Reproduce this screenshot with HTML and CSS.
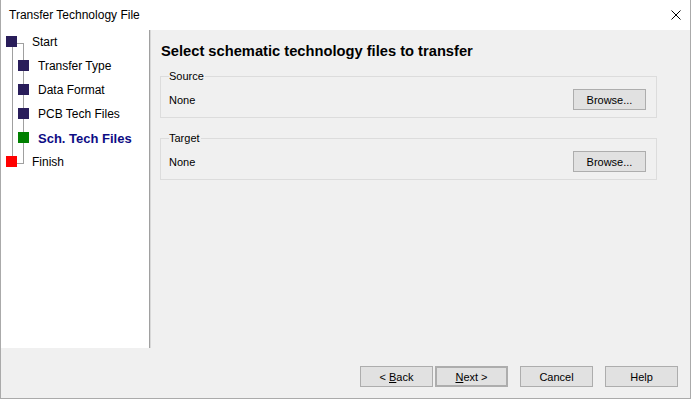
FILE: index.html
```html
<!DOCTYPE html>
<html lang="en">
<head>
  <meta charset="UTF-8" />
  <title>Transfer Technology File</title>
  <link rel="stylesheet" href="styles.css">
</head>
<body>
  <div class="janela">
    <div class="titulo">
      <span>Transfer Technology File</span>
      <svg class="fechar" width="10" height="10" viewBox="0 0 10 10">
        <path d="M0.5 0.5 L9.5 9.5 M9.5 0.5 L0.5 9.5" stroke="#000" stroke-width="1" fill="none" />
      </svg>
    </div>

    <div class="meio">
      <div class="lateral">
        <svg class="linhas" width="40" height="140">
          <path d="M11.5 17 V126 M22.5 13 V134 M16 13.5 H23 M16 133.5 H23" stroke="#a0a0a0" stroke-width="1" fill="none" />
        </svg>
        <div class="passo"><span class="quad"></span>Start</div>
        <div class="passo sub"><span class="quad"></span>Transfer Type</div>
        <div class="passo sub"><span class="quad"></span>Data Format</div>
        <div class="passo sub"><span class="quad"></span>PCB Tech Files</div>
        <div class="passo sub atual"><span class="quad verde"></span>Sch. Tech Files</div>
        <div class="passo"><span class="quad vermelho"></span>Finish</div>
      </div>

      <div class="conteudo">
        <h1>Select schematic technology files to transfer</h1>

        <fieldset class="grupo">
          <legend>Source</legend>
          <div class="linha">
            <span>None</span>
            <button type="button" class="botao">Browse...</button>
          </div>
        </fieldset>

        <fieldset class="grupo">
          <legend>Target</legend>
          <div class="linha">
            <span>None</span>
            <button type="button" class="botao">Browse...</button>
          </div>
        </fieldset>
      </div>
    </div>

    <div class="rodape">
      <button type="button" class="botao">&lt; <u>B</u>ack</button>
      <button type="button" class="botao padrao"><u>N</u>ext &gt;</button>
      <button type="button" class="botao afastado">Cancel</button>
      <button type="button" class="botao afastado">Help</button>
    </div>
  </div>
</body>
</html>
```

FILE: styles.css
```css
body {
  margin: 0;
  font-family: "Liberation Sans", Arial, sans-serif;
  color: #000;
}
.janela {
  width: 691px;
  height: 399px;
  box-sizing: border-box;
  border: 1px solid #aaaaaa;
  border-top: none;
  background: #f0f0f0;
  display: flex;
  flex-direction: column;
}
.titulo {
  height: 30px;
  background: #fff;
  display: flex;
  align-items: center;
  justify-content: space-between;
  padding: 0 9px 0 8px;
  font-size: 12px;
}
.fechar {
  display: block;
}
.meio {
  display: flex;
  height: 318px;
}
.lateral {
  width: 148px;
  background: #fff;
  border-right: 1px solid #a0a0a0;
  position: relative;
}
.linhas {
  position: absolute;
  left: 0;
  top: 0;
}
.passo {
  position: relative;
  display: flex;
  align-items: flex-start;
  height: 24px;
  line-height: 25px;
  font-size: 12px;
  padding-left: 5px;
}
.passo .quad {
  width: 11px;
  height: 11px;
  margin-top: 6px;
  margin-right: 15px;
  background: #291d5a;
  flex-shrink: 0;
}
.passo.sub {
  padding-left: 17px;
}
.passo.sub .quad {
  margin-right: 9px;
}
.quad.verde {
  background: #008000;
}
.quad.vermelho {
  background: #ff0000;
}
.passo.atual {
  font-weight: bold;
  font-size: 13px;
  color: #0c0c84;
}
.conteudo {
  flex: 1;
  border-left: 1px solid #d8d8d8;
  padding: 11px 33px 0 9px;
  font-size: 11px;
}
h1 {
  font-size: 14.7px;
  margin: 0 0 9px 1px;
  line-height: 20px;
}
.grupo {
  margin: 0 0 14px 0;
  padding: 0 10px 7px 8px;
  border: 1px solid #dcdcdc;
}
.grupo legend {
  padding: 0 1px 0 0;
  line-height: 13px;
}
.linha {
  display: flex;
  align-items: center;
  justify-content: space-between;
  margin-top: 6px;
}
.botao {
  width: 73px;
  height: 21px;
  padding: 0;
  border: 1px solid #adadad;
  background: #e1e1e1;
  font-family: "Liberation Sans", Arial, sans-serif;
  font-size: 11px;
  color: #000;
}
.botao.padrao {
  border: 2px solid #adadad;
  margin-left: 2px;
}
.botao.afastado {
  margin-left: 12px;
}
.rodape {
  flex: 1;
  display: flex;
  justify-content: flex-end;
  align-items: flex-start;
  padding: 18px 12px 0 0;
}
```
